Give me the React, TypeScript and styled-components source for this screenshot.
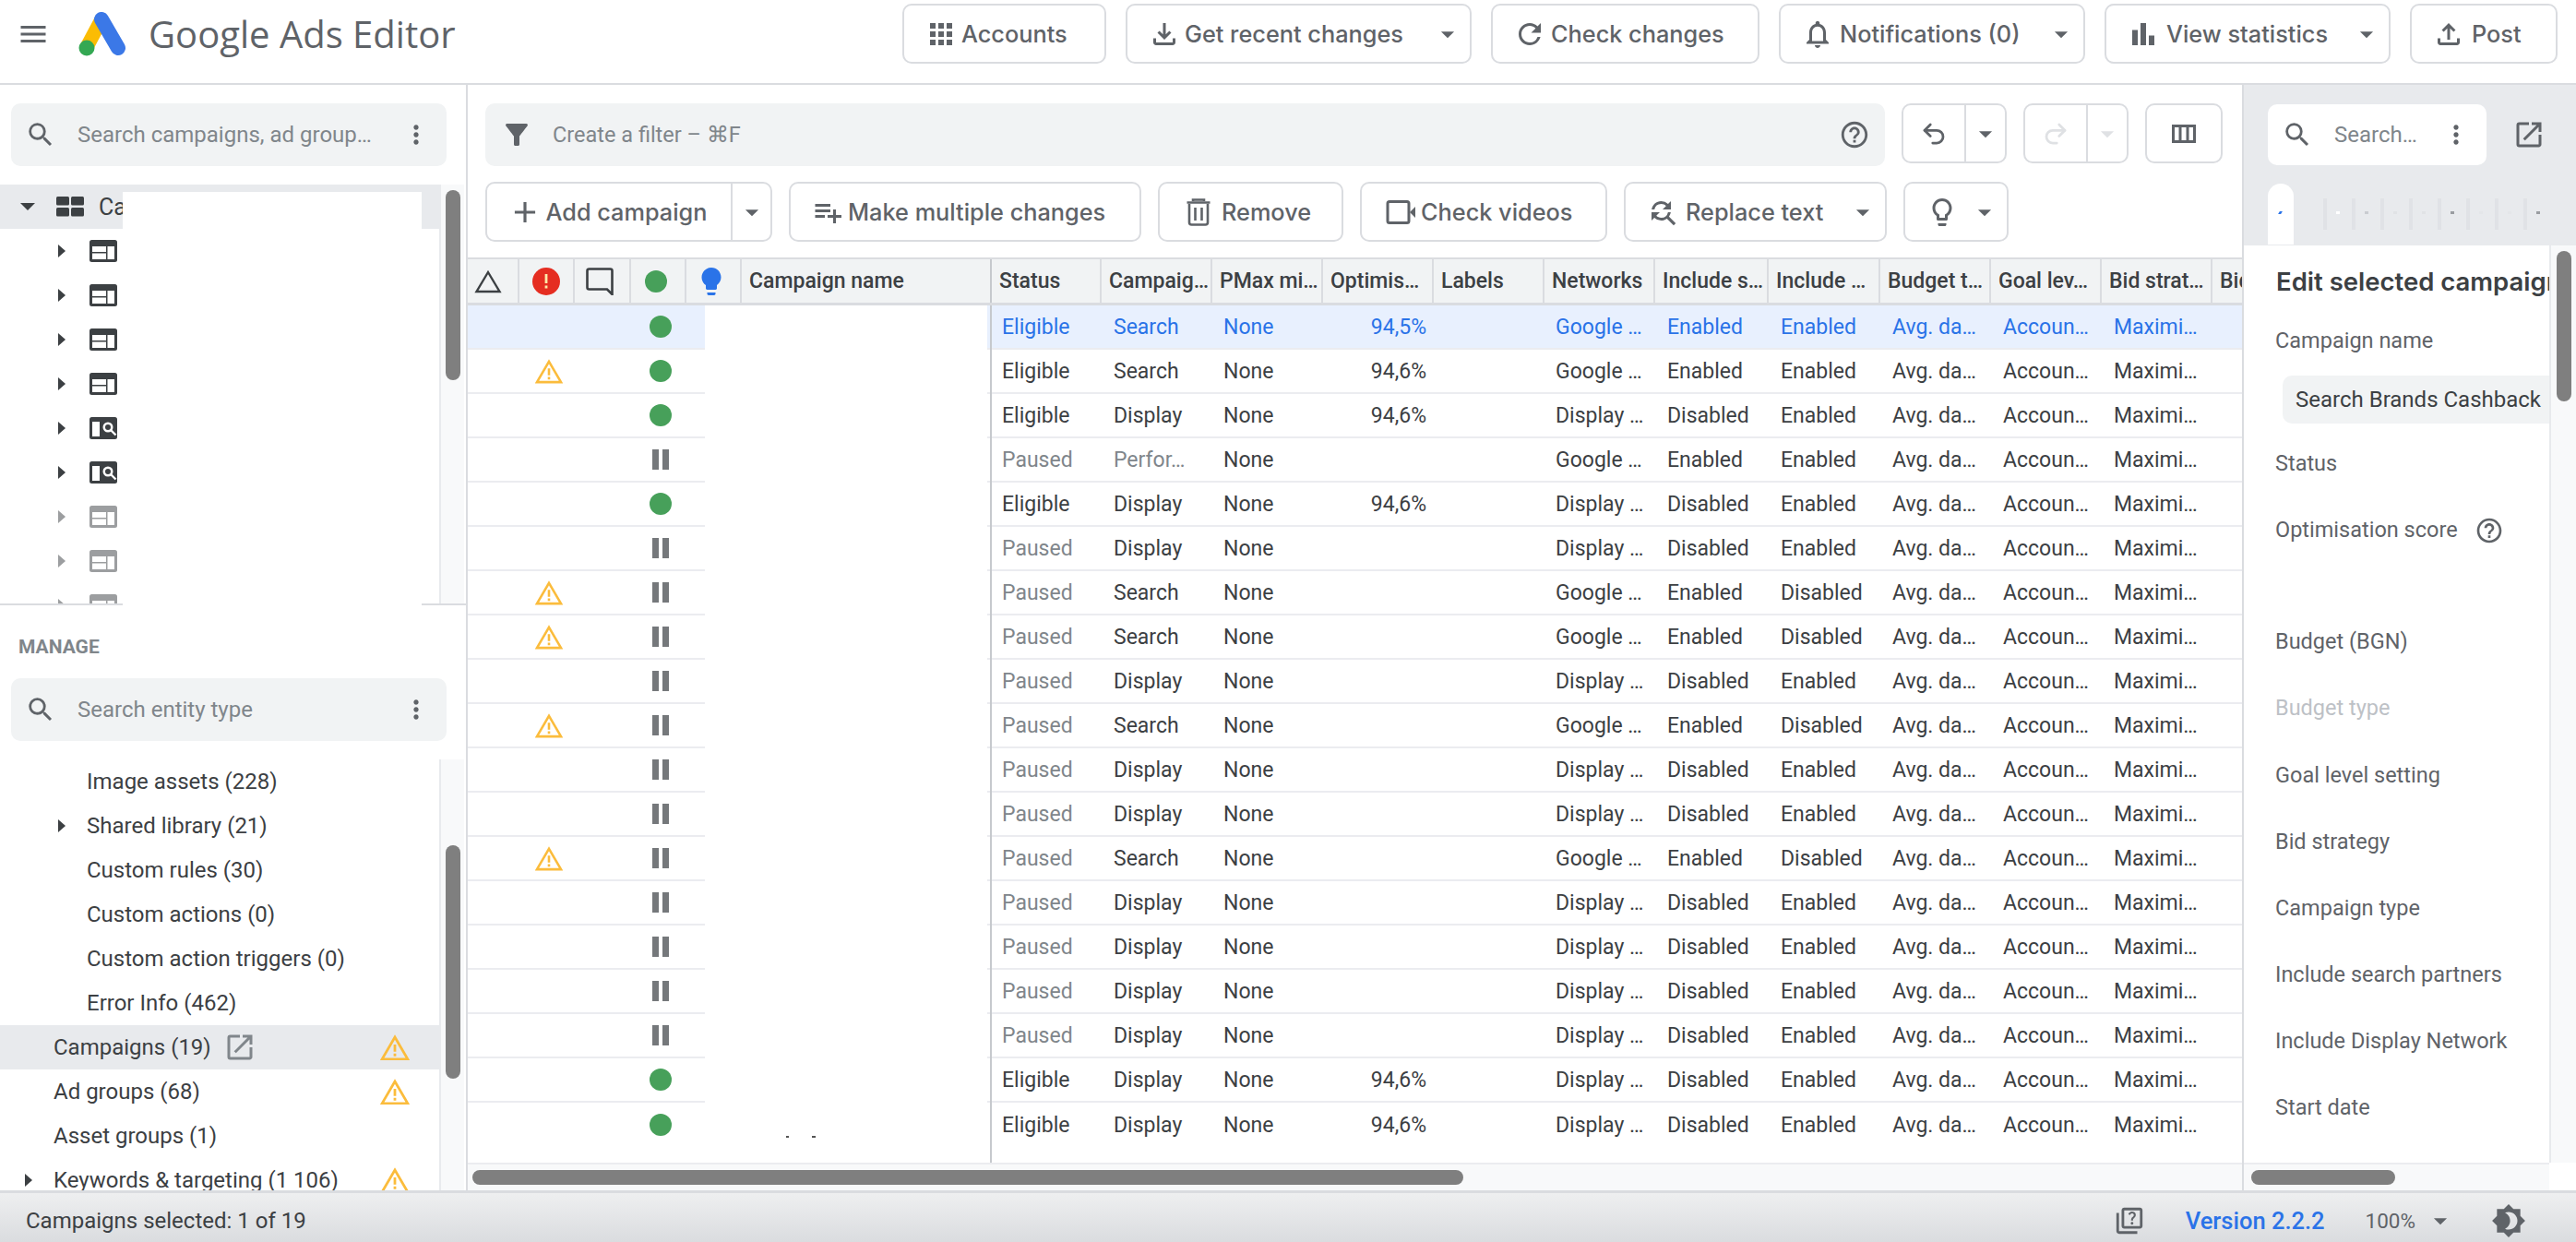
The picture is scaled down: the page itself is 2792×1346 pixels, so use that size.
import React from "react";
import styled, { createGlobalStyle } from "styled-components";
import { Redo2, Undo2 } from "lucide-react";
import {
    MdAdd,
    MdApps,
    MdArrowDropDown,
    MdBarChart,
    MdBrightness4,
    MdFilterAlt,
    MdFindReplace,
    MdHelpOutline,
    MdLightbulb,
    MdMenu,
    MdMoreVert,
    MdOpenInNew,
    MdOutlineFileDownload,
    MdOutlineFileUpload,
    MdOutlineLightbulb,
    MdOutlineNotifications,
    MdOutlineQuiz,
    MdPlaylistAdd,
    MdRefresh,
    MdSearch,
} from "react-icons/md";

const UI_FONT = `"Roboto", "Liberation Sans", sans-serif`;
const TITLE_FONT = `"Open Sans", "Roboto", sans-serif`;
const BUTTON_FONT = `"Inter", "Roboto", sans-serif`;

const Colors = {
    text: "#3c4043",
    icon: "#5f6368",
    muted: "#80868b",
    faint: "#dfe1e4",
    label: "#bdc1c6",
    line: "#dadce0",
    rowLine: "#ebecf0",
    field: "#f1f3f4",
    track: "#f8f9fa",
    thumb: "#7f7f7f",
    panel: "#e8eaed",
    blue: "#2a73e8",
    selected: "#e8f0fe",
    green: "#47a05a",
    yellow: "#fbbc3c",
};

const GlobalStyle = createGlobalStyle`
    html, body {
        margin: 0;
        padding: 0;
        background: #fff;
    }
    body {
        font-family: ${UI_FONT};
        color: ${Colors.text};
    }
    * {
        box-sizing: border-box;
    }
`;

const Page = styled.div`
    width: 2792px;
    height: 1346px;
    display: flex;
    flex-direction: column;
    overflow: hidden;
`;

/* top bar */

const TopBar = styled.header`
    height: 92px;
    flex: none;
    display: flex;
    align-items: flex-start;
    padding: 4px 20px 0 18px;
    border-bottom: 2px solid ${Colors.line};
`;

const Brand = styled.div`
    display: flex;
    align-items: center;
    height: 65px;
    color: ${Colors.icon};
    margin-right: auto;
`;

const LogoSlot = styled.div`
    margin: 0 24px 0 31px;
    display: flex;
`;

const Title = styled.h1`
    margin: 0;
    font-family: ${TITLE_FONT};
    font-size: 40px;
    font-weight: 500;
    color: ${Colors.icon};
`;

const TopButtons = styled.div`
    display: flex;
    gap: 21px;
`;

const Btn = styled.div<{ $w: number; $pad?: number; $disabled?: boolean }>`
    width: ${(p) => p.$w}px;
    height: 65px;
    flex: none;
    display: flex;
    align-items: center;
    padding: 0 7px 0 ${(p) => p.$pad ?? 22}px;
    border: 2px solid ${Colors.line};
    border-radius: 10px;
    background: #fff;
    font-family: ${BUTTON_FONT};
    font-size: 25.3px;
    font-weight: 500;
    color: ${(p) => (p.$disabled ? Colors.faint : Colors.icon)};
    white-space: nowrap;
`;

const BtnLabel = styled.span<{ $gap?: number }>`
    margin-left: ${(p) => p.$gap ?? 4}px;
    margin-right: auto;
`;

const CenteredLabel = styled.span`
    margin-left: 4px;
`;

const SplitPart = styled.div<{ $w: number; $nudge?: number }>`
    width: ${(p) => p.$w}px;
    height: 100%;
    flex: none;
    display: flex;
    align-items: center;
    justify-content: center;
    padding-right: ${(p) => p.$nudge ?? 0}px;
    & + & {
        border-left: 2px solid ${Colors.line};
    }
`;

const SplitBtn = styled(Btn)`
    padding: 0;
`;

/* left column */

const Body = styled.div`
    flex: 1;
    min-height: 0;
    display: flex;
`;

const LeftColumn = styled.aside`
    width: 507px;
    flex: none;
    display: flex;
    flex-direction: column;
    border-right: 2px solid ${Colors.line};
`;

const TreeSection = styled.section`
    position: relative;
    height: 564px;
    flex: none;
    padding-top: 20px;
    border-bottom: 2px solid ${Colors.line};
    display: flex;
    flex-direction: column;
`;

const Search = styled.div<{ $w?: number; $white?: boolean }>`
    width: ${(p) => p.$w ?? 472}px;
    height: 68px;
    flex: none;
    margin-left: 12px;
    display: flex;
    align-items: center;
    padding: 0 17px 0 15px;
    border-radius: 10px;
    background: ${(p) => (p.$white ? "#fff" : Colors.field)};
    color: ${Colors.icon};
    font-size: 24px;
`;

const SearchText = styled.span`
    margin-left: 23px;
    margin-right: auto;
    color: ${Colors.muted};
    white-space: nowrap;
`;

const ScrollArea = styled.div`
    flex: 1;
    min-height: 0;
    display: flex;
`;

const TreeScroll = styled(ScrollArea)`
    margin-top: 20px;
`;

const TreeList = styled.div`
    width: 476px;
    flex: none;
    overflow: hidden;
`;

const TreeRow = styled.div<{ $indent: number; $active?: boolean; $dim?: boolean }>`
    height: 48px;
    display: flex;
    align-items: center;
    padding-left: ${(p) => p.$indent}px;
    background: ${(p) => (p.$active ? Colors.panel : "transparent")};
    opacity: ${(p) => (p.$dim ? 0.5 : 1)};
    font-size: 25px;
    color: ${Colors.text};
`;

const Track = styled.div<{ $thumbTop: number; $thumbHeight: number }>`
    position: relative;
    width: 27px;
    flex: none;
    background: ${Colors.track};
    border-left: 2px solid ${Colors.panel};
    &::after {
        content: "";
        position: absolute;
        left: 5px;
        top: ${(p) => p.$thumbTop}px;
        width: 16px;
        height: ${(p) => p.$thumbHeight}px;
        border-radius: 8px;
        background: ${Colors.thumb};
    }
`;

const TreeCover = styled.div`
    position: absolute;
    left: 133px;
    top: 116px;
    width: 324px;
    bottom: -2px;
    background: #fff;
`;

const Caret = styled.i<{ $down?: boolean }>`
    display: block;
    width: 0;
    height: 0;
    flex: none;
    border-style: solid;
    ${(p) =>
        p.$down
            ? `border-width: 8px 8px 0 8px; border-color: ${Colors.text} transparent transparent transparent;`
            : `border-width: 7px 0 7px 8px; border-color: transparent transparent transparent ${Colors.text};`}
`;

const TreeIconSlot = styled.span<{ $left: number }>`
    display: flex;
    margin-left: ${(p) => p.$left}px;
`;

const TreeLabel = styled.span`
    margin-left: 16px;
`;

/* manage list */

const ManageSection = styled.section`
    flex: 1;
    min-height: 0;
    display: flex;
    flex-direction: column;
`;

const ManageHeading = styled.h2`
    margin: 0;
    height: 79px;
    padding: 33px 0 0 20px;
    font-size: 21px;
    line-height: 24px;
    font-weight: 700;
    color: ${Colors.muted};
    flex: none;
`;

const ManageList = styled.div`
    width: 476px;
    flex: none;
    overflow: hidden;
`;

const ManageRow = styled.div<{ $active?: boolean; $depth: number }>`
    height: 48px;
    display: flex;
    align-items: center;
    padding-left: ${(p) => (p.$depth ? 94 : 58)}px;
    padding-right: 32px;
    position: relative;
    background: ${(p) => (p.$active ? Colors.panel : "transparent")};
    font-size: 24px;
    white-space: nowrap;
`;

const RowCaret = styled.span<{ $depth: number }>`
    position: absolute;
    left: ${(p) => (p.$depth ? 63 : 27)}px;
    top: 17px;
`;

const RowWarn = styled.span`
    margin-left: auto;
    display: flex;
`;

const RowOpen = styled.span`
    margin-left: 13px;
    display: flex;
    color: ${Colors.muted};
`;

const ManageScroll = styled(ScrollArea)`
    margin-top: 20px;
    overflow: hidden;
`;

/* centre */

const Center = styled.main`
    flex: 1;
    min-width: 0;
    display: flex;
    flex-direction: column;
    border-right: 2px solid ${Colors.line};
`;

const FilterRow = styled.div`
    display: flex;
    gap: 18px;
    height: 105px;
    padding: 20px 0 0 19px;
    flex: none;
`;

const FilterBar = styled.div`
    width: 1517px;
    height: 68px;
    display: flex;
    align-items: center;
    padding: 0 16px 0 16px;
    background: ${Colors.field};
    border-radius: 10px;
    color: ${Colors.icon};
    font-size: 23.5px;
`;

const FilterText = styled(SearchText)`
    margin-left: 21px;
`;

const ActionRow = styled.div`
    display: flex;
    gap: 18px;
    height: 82px;
    padding-left: 19px;
    flex: none;
`;

const Table = styled.div`
    flex: 1;
    min-height: 0;
    overflow: hidden;
    border-top: 2px solid ${Colors.line};
    position: relative;
    &::after {
        content: "";
        position: absolute;
        left: 566px;
        top: 50px;
        bottom: 0;
        width: 2px;
        background: #c6c9cd;
    }
`;

const HeadRow = styled.div`
    height: 50px;
    display: flex;
    background: ${Colors.field};
    border-bottom: 3px solid ${Colors.line};
`;

const HeadIcon = styled.div<{ $w: number; $shift?: number }>`
    width: ${(p) => p.$w}px;
    flex: none;
    display: flex;
    align-items: center;
    justify-content: center;
    padding-right: ${(p) => p.$shift ?? 0}px;
    border-right: 2px solid ${Colors.line};
`;

const HeadCell = styled.div<{ $w: number; $strong?: boolean }>`
    width: ${(p) => p.$w}px;
    flex: none;
    display: flex;
    align-items: center;
    padding-left: 8px;
    font-size: 23px;
    font-weight: 500;
    color: ${Colors.text};
    white-space: nowrap;
    overflow: hidden;
    border-right: 2px solid ${(p) => (p.$strong ? "#c6c9cd" : Colors.line)};
`;

const Rows = styled.div`
    height: 930px;
`;

const DataRow = styled.div<{ $selected?: boolean }>`
    height: 48px;
    display: flex;
    background: ${(p) => (p.$selected ? Colors.selected : "#fff")};
    border-bottom: 2px solid ${Colors.rowLine};
    font-size: 23px;
    color: ${(p) => (p.$selected ? Colors.blue : Colors.text)};
    white-space: nowrap;
    &:last-child {
        border-bottom: 0;
    }
`;

const WarnCell = styled.div`
    width: 120px;
    padding-left: 56px;
    flex: none;
    display: flex;
    align-items: center;
    justify-content: center;
`;

const StateCell = styled.div`
    width: 137px;
    padding-right: 18px;
    flex: none;
    display: flex;
    align-items: center;
    justify-content: flex-end;
`;

const StateSlot = styled.div`
    width: 60px;
    display: flex;
    justify-content: center;
`;

const Dot = styled.span`
    width: 24px;
    height: 24px;
    border-radius: 50%;
    background: ${Colors.green};
`;

const Pause = styled.span`
    width: 18px;
    height: 22px;
    border-left: 7px solid #75787b;
    border-right: 7px solid #75787b;
`;

const NameCell = styled.div`
    width: 306px;
    flex: none;
    background: #fff;
    margin-bottom: -2px;
`;

const NameGap = styled.div`
    width: 6px;
    flex: none;
`;

const Cell = styled.div<{ $w: number; $pad?: number; $right?: boolean; $dim?: boolean }>`
    width: ${(p) => p.$w}px;
    flex: none;
    display: flex;
    align-items: center;
    justify-content: ${(p) => (p.$right ? "flex-end" : "flex-start")};
    padding-left: ${(p) => p.$pad ?? 12}px;
    padding-right: ${(p) => (p.$right ? 9 : 0)}px;
    color: ${(p) => (p.$dim ? Colors.muted : "inherit")};
`;

const Specks = styled.i`
    position: absolute;
    left: 345px;
    top: 950px;
    width: 32px;
    height: 2px;
    background: linear-gradient(90deg, #555 0 3px, transparent 3px 28px, #555 28px 32px);
`;

const HScroll = styled.div<{ $left: number; $width: number }>`
    position: relative;
    height: 30px;
    flex: none;
    background: ${Colors.track};
    border-top: 2px solid ${Colors.rowLine};
    &::after {
        content: "";
        position: absolute;
        left: ${(p) => p.$left}px;
        top: 6px;
        width: ${(p) => p.$width}px;
        height: 16px;
        border-radius: 8px;
        background: ${Colors.thumb};
    }
`;

/* right panel */

const RightPanel = styled.aside`
    width: 360px;
    flex: none;
    display: flex;
    flex-direction: column;
`;

const RightHead = styled.div`
    height: 174px;
    flex: none;
    background: ${Colors.panel};
    padding-top: 21px;
    color: ${Colors.icon};
`;

const RightSearchRow = styled.div`
    display: flex;
    align-items: center;
    padding-left: 14px;
`;

const RightSearch = styled(Search)`
    height: 66px;
`;

const OpenSlot = styled.span`
    margin-left: 28px;
    display: flex;
`;

const TabStrip = styled.div`
    display: flex;
    align-items: flex-end;
    height: 66px;
    margin-top: 20px;
    padding-left: 26px;
`;

const ActiveTab = styled.div`
    position: relative;
    width: 28px;
    height: 66px;
    margin-right: 32px;
    background: #fff;
    border-radius: 14px 14px 0 0;
    flex: none;
    &::after {
        content: "";
        position: absolute;
        left: 12px;
        top: 30px;
        width: 3px;
        height: 3px;
        background: ${Colors.blue};
        transform: skewX(-30deg);
    }
`;

const TabLine = styled.span`
    position: relative;
    width: 4px;
    height: 34px;
    margin: 0 27px 16px 0;
    background: #e0e2e6;
    flex: none;
`;

const TabDot = styled.i<{ $tone: string }>`
    position: absolute;
    left: 14px;
    top: 14px;
    width: 4px;
    height: 3px;
    background: ${(p) => p.$tone};
`;

const RightScroll = styled.div`
    flex: 1;
    min-height: 0;
    display: flex;
`;

const Form = styled.div`
    width: 331px;
    flex: none;
    overflow: hidden;
    padding-left: 34px;
    white-space: nowrap;
`;

const FormTitle = styled.h3`
    margin: 0;
    height: 88px;
    padding: 21px 0 0 1px;
    font-family: ${BUTTON_FONT};
    font-size: 27.5px;
    line-height: 36px;
    font-weight: 600;
    color: ${Colors.text};
`;

const FieldLabel = styled.div<{ $h: number; $disabled?: boolean }>`
    height: ${(p) => p.$h}px;
    display: flex;
    align-items: flex-start;
    font-size: 23.5px;
    line-height: 30px;
    color: ${(p) => (p.$disabled ? Colors.label : Colors.icon)};
`;

const HelpSlot = styled.span`
    margin-left: 18px;
    display: flex;
`;

const NameInput = styled.div`
    height: 52px;
    margin: 0 0 28px 8px;
    width: 320px;
    display: flex;
    align-items: center;
    padding-left: 14px;
    border-radius: 10px;
    background: ${Colors.field};
    font-size: 24px;
    color: ${Colors.text};
`;

const RightTrack = styled.div`
    position: relative;
    flex: 1;
    background: ${Colors.track};
    border-left: 2px solid ${Colors.panel};
    &::after {
        content: "";
        position: absolute;
        left: 6px;
        top: 6px;
        width: 16px;
        height: 163px;
        border-radius: 8px;
        background: ${Colors.thumb};
    }
`;

const RightBottom = styled.div`
    width: 331px;
`;

/* footer */

const Footer = styled.footer`
    height: 56px;
    flex: none;
    display: flex;
    align-items: center;
    padding: 6px 54px 0 28px;
    border-top: 3px solid ${Colors.line};
    background: linear-gradient(#eeeff0, #dadcdf);
    font-size: 24px;
    color: ${Colors.text};
`;

const FooterLeft = styled.span`
    margin-right: auto;
`;

const VersionLink = styled.span`
    margin: 0 44px 0 44px;
    color: ${Colors.blue};
    font-size: 25.5px;
    font-weight: 500;
`;

const Zoom = styled.span`
    display: flex;
    align-items: center;
    font-size: 22.5px;
    color: ${Colors.icon};
    margin-right: 38px;
    gap: 10px;
`;

/* drawn icons */

const Logo = () => (
    <svg width="52" height="48" viewBox="0 0 52 48">
        <path d="M25 8 L9 38" stroke="#fbbc04" strokeWidth="15" fill="none" />
        <circle cx="9" cy="39" r="8.5" fill="#34a853" />
        <path d="M25 8 L43 39" stroke="#3b78e7" strokeWidth="16" strokeLinecap="round" fill="none" />
    </svg>
);

const Warning = ({ size = 32 }: { size?: number }) => (
    <svg width={size} height={size * 0.9} viewBox="0 0 32 29">
        <path d="M16 3 L30 27 H2 Z" fill="none" stroke={Colors.yellow} strokeWidth="2.8" />
        <path d="M14.6 11 h2.8 v8 h-2.8z M14.6 21 h2.8 v2.8 h-2.8z" fill={Colors.yellow} />
    </svg>
);

const ErrorMark = () => (
    <svg width="30" height="30" viewBox="0 0 30 30">
        <circle cx="15" cy="15" r="15" fill="#e52d21" />
        <path d="M13.6 7 h2.8 v10 h-2.8z M13.6 19.5 h2.8 v3 h-2.8z" fill="#fde9a8" />
    </svg>
);

const DeltaMark = () => (
    <svg width="30" height="26" viewBox="0 0 30 26">
        <path d="M15 3 L27.5 24 H2.5 Z" fill="none" stroke={Colors.text} strokeWidth="2.4" />
    </svg>
);

const CommentMark = () => (
    <svg width="30" height="30" viewBox="0 0 30 30">
        <path d="M3.5 1.5 H26.5 Q28.5 1.5 28.5 3.5 V29 L23 23.5 H3.5 Q1.5 23.5 1.5 21.5 V3.5 Q1.5 1.5 3.5 1.5 Z" fill="none" stroke={Colors.text} strokeWidth="2.6" />
    </svg>
);

const GridIcon = () => (
    <svg width="30" height="22" viewBox="0 0 30 22">
        <rect x="0" y="0" width="14" height="9.5" rx="1.5" fill="#3c4043" />
        <rect x="16" y="0" width="14" height="9.5" rx="1.5" fill="#3c4043" />
        <rect x="0" y="12" width="14" height="9.5" rx="1.5" fill="#3c4043" />
        <rect x="16" y="12" width="14" height="9.5" rx="1.5" fill="#3c4043" />
    </svg>
);

const TableIcon = () => (
    <svg width="30" height="24" viewBox="0 0 30 24">
        <rect width="30" height="24" rx="2.5" fill="#3c4043" />
        <rect x="3" y="7" width="15" height="6" fill="#fff" />
        <rect x="3" y="14.5" width="15" height="6.5" fill="#fff" />
        <rect x="19.5" y="7" width="7.5" height="14" fill="#fff" />
    </svg>
);

const SearchTableIcon = () => (
    <svg width="30" height="24" viewBox="0 0 30 24">
        <rect width="30" height="24" rx="2.5" fill="#3c4043" />
        <rect x="3" y="5" width="8" height="16" fill="#fff" />
        <circle cx="20" cy="11" r="5.5" fill="#fff" />
        <circle cx="20" cy="11" r="3" fill="#3c4043" />
        <path d="M23 14 L28.5 19.5" stroke="#fff" strokeWidth="2.4" />
    </svg>
);

const TrashIcon = () => (
    <svg width="32" height="32" viewBox="0 0 32 32">
        <path d="M3.5 5.5 H28.5 M10 4 V2.5 H22 V4" fill="none" stroke={Colors.icon} strokeWidth="2.6" />
        <path d="M6 7 V27 Q6 29.5 8.5 29.5 H23.5 Q26 29.5 26 27 V7" fill="none" stroke={Colors.icon} strokeWidth="2.6" />
        <path d="M12.5 11 V25 M19.5 11 V25" fill="none" stroke={Colors.icon} strokeWidth="2.6" />
    </svg>
);

const VideoIcon = () => (
    <svg width="34" height="28" viewBox="0 0 34 28">
        <rect x="2" y="2.5" width="23" height="23" rx="2" fill="none" stroke={Colors.icon} strokeWidth="3" />
        <path d="M26 14 L32 8 V20 Z" fill={Colors.icon} />
    </svg>
);

const ColumnsIcon = () => (
    <svg width="26" height="20" viewBox="0 0 26 20">
        <path d="M0 0 H26 V20 H0 Z M3 3 V17 H7.5 V3 Z M10.5 3 V17 H15.5 V3 Z M18.5 3 V17 H23 V3 Z" fill={Colors.icon} fillRule="evenodd" />
    </svg>
);

/* data */

type Campaign = {
    status: "Eligible" | "Paused";
    type: string;
    score?: string;
    partners: "Enabled" | "Disabled";
    display: "Enabled" | "Disabled";
    warn?: boolean;
};

const paused = (type: string, warn = false): Campaign => ({
    status: "Paused",
    type,
    partners: type === "Search" ? "Enabled" : "Disabled",
    display: type === "Search" ? "Disabled" : "Enabled",
    warn,
});

const campaigns: Campaign[] = [
    { status: "Eligible", type: "Search", score: "94,5%", partners: "Enabled", display: "Enabled" },
    { status: "Eligible", type: "Search", score: "94,6%", partners: "Enabled", display: "Enabled", warn: true },
    { status: "Eligible", type: "Display", score: "94,6%", partners: "Disabled", display: "Enabled" },
    { status: "Paused", type: "Perfor…", partners: "Enabled", display: "Enabled" },
    { status: "Eligible", type: "Display", score: "94,6%", partners: "Disabled", display: "Enabled" },
    paused("Display"),
    paused("Search", true),
    paused("Search", true),
    paused("Display"),
    paused("Search", true),
    paused("Display"),
    paused("Display"),
    paused("Search", true),
    paused("Display"),
    paused("Display"),
    paused("Display"),
    paused("Display"),
    { status: "Eligible", type: "Display", score: "94,6%", partners: "Disabled", display: "Enabled" },
    { status: "Eligible", type: "Display", score: "94,6%", partners: "Disabled", display: "Enabled" },
];

const headColumns: [string, number][] = [
    ["Status", 119],
    ["Campaig…", 120],
    ["PMax mi…", 120],
    ["Optimis…", 120],
    ["Labels", 120],
    ["Networks", 120],
    ["Include s…", 123],
    ["Include …", 121],
    ["Budget t…", 120],
    ["Goal lev…", 120],
    ["Bid strat…", 120],
    ["Bid", 120],
];

const treeRows = [
    { kind: "table" },
    { kind: "table" },
    { kind: "table" },
    { kind: "table" },
    { kind: "search" },
    { kind: "search" },
    { kind: "table", dim: true },
    { kind: "table", dim: true },
    { kind: "table", dim: true },
];

const manageRows = [
    { label: "Image assets (228)", depth: 1 },
    { label: "Shared library (21)", depth: 1, caret: true },
    { label: "Custom rules (30)", depth: 1 },
    { label: "Custom actions (0)", depth: 1 },
    { label: "Custom action triggers (0)", depth: 1 },
    { label: "Error Info (462)", depth: 1 },
    { label: "Campaigns (19)", depth: 0, active: true, warn: true, open: true },
    { label: "Ad groups (68)", depth: 0, warn: true },
    { label: "Asset groups (1)", depth: 0 },
    { label: "Keywords & targeting (1 106)", depth: 0, caret: true, warn: true },
];

const fields: { label: string; h: number; disabled?: boolean; help?: boolean }[] = [
    { label: "Status", h: 72 },
    { label: "Optimisation score", h: 121, help: true },
    { label: "Budget (BGN)", h: 72 },
    { label: "Budget type", h: 73, disabled: true },
    { label: "Goal level setting", h: 72 },
    { label: "Bid strategy", h: 72 },
    { label: "Campaign type", h: 72 },
    { label: "Include search partners", h: 72 },
    { label: "Include Display Network", h: 72 },
    { label: "Start date", h: 40 },
];

const tabDots = ["#fff", "#c9ccd0", "#e0e2e5", "#e0e2e5", "#9a9da1", "#e4e6e9", "#e4e6e9", "#9a9da1"];

const App: React.FC = () => {
    return (
        <Page>
            <GlobalStyle />
            <TopBar>
                <Brand>
                    <MdMenu size={36} />
                    <LogoSlot>
                        <Logo />
                    </LogoSlot>
                    <Title>Google Ads Editor</Title>
                </Brand>
                <TopButtons>
                    <Btn $w={221}>
                        <MdApps size={36} />
                        <BtnLabel>Accounts</BtnLabel>
                    </Btn>
                    <Btn $w={375}>
                        <MdOutlineFileDownload size={36} />
                        <BtnLabel>Get recent changes</BtnLabel>
                        <MdArrowDropDown size={34} />
                    </Btn>
                    <Btn $w={291}>
                        <MdRefresh size={36} />
                        <BtnLabel $gap={5}>Check changes</BtnLabel>
                    </Btn>
                    <Btn $w={332}>
                        <MdOutlineNotifications size={36} />
                        <BtnLabel $gap={6}>Notifications (0)</BtnLabel>
                        <MdArrowDropDown size={34} />
                    </Btn>
                    <Btn $w={310}>
                        <MdBarChart size={36} />
                        <BtnLabel $gap={7}>View statistics</BtnLabel>
                        <MdArrowDropDown size={34} />
                    </Btn>
                    <Btn $w={160}>
                        <MdOutlineFileUpload size={36} />
                        <BtnLabel $gap={7}>Post</BtnLabel>
                    </Btn>
                </TopButtons>
            </TopBar>
            <Body>
                <LeftColumn>
                    <TreeSection>
                        <Search>
                            <MdSearch size={34} />
                            <SearchText>Search campaigns, ad group…</SearchText>
                            <MdMoreVert size={32} />
                        </Search>
                        <TreeScroll>
                            <TreeList>
                                <TreeRow $indent={22} $active>
                                    <Caret $down />
                                    <TreeIconSlot $left={23}>
                                        <GridIcon />
                                    </TreeIconSlot>
                                    <TreeLabel>Campaigns</TreeLabel>
                                </TreeRow>
                                {treeRows.map((row, i) => (
                                    <TreeRow key={i} $indent={63} $dim={row.dim}>
                                        <Caret />
                                        <TreeIconSlot $left={26}>
                                            {row.kind === "table" ? <TableIcon /> : <SearchTableIcon />}
                                        </TreeIconSlot>
                                    </TreeRow>
                                ))}
                            </TreeList>
                            <Track $thumbTop={6} $thumbHeight={206} />
                        </TreeScroll>
                        <TreeCover />
                    </TreeSection>
                    <ManageSection>
                        <ManageHeading>MANAGE</ManageHeading>
                        <Search>
                            <MdSearch size={34} />
                            <SearchText>Search entity type</SearchText>
                            <MdMoreVert size={32} />
                        </Search>
                        <ManageScroll>
                            <ManageList>
                                {manageRows.map((row) => (
                                    <ManageRow key={row.label} $depth={row.depth} $active={row.active}>
                                        {row.caret && (
                                            <RowCaret $depth={row.depth}>
                                                <Caret />
                                            </RowCaret>
                                        )}
                                        {row.label}
                                        {row.open && (
                                            <RowOpen>
                                                <MdOpenInNew size={36} />
                                            </RowOpen>
                                        )}
                                        {row.warn && (
                                            <RowWarn>
                                                <Warning />
                                            </RowWarn>
                                        )}
                                    </ManageRow>
                                ))}
                            </ManageList>
                            <Track $thumbTop={93} $thumbHeight={253} />
                        </ManageScroll>
                    </ManageSection>
                </LeftColumn>
                <Center>
                    <FilterRow>
                        <FilterBar>
                            <MdFilterAlt size={36} />
                            <FilterText>Create a filter – ⌘F</FilterText>
                            <MdHelpOutline size={34} />
                        </FilterBar>
                        <SplitBtn $w={114}>
                            <SplitPart $w={66}>
                                <Undo2 size={30} strokeWidth={2.2} />
                            </SplitPart>
                            <SplitPart $w={44}>
                                <MdArrowDropDown size={34} />
                            </SplitPart>
                        </SplitBtn>
                        <SplitBtn $w={114} $disabled>
                            <SplitPart $w={66}>
                                <Redo2 size={30} strokeWidth={2.2} />
                            </SplitPart>
                            <SplitPart $w={44}>
                                <MdArrowDropDown size={34} />
                            </SplitPart>
                        </SplitBtn>
                        <SplitBtn $w={84}>
                            <SplitPart $w={80}>
                                <ColumnsIcon />
                            </SplitPart>
                        </SplitBtn>
                    </FilterRow>
                    <ActionRow>
                        <SplitBtn $w={311}>
                            <SplitPart $w={264} $nudge={4}>
                                <MdAdd size={38} />
                                <CenteredLabel>Add campaign</CenteredLabel>
                            </SplitPart>
                            <SplitPart $w={43}>
                                <MdArrowDropDown size={34} />
                            </SplitPart>
                        </SplitBtn>
                        <Btn $w={382}>
                            <MdPlaylistAdd size={36} />
                            <BtnLabel>Make multiple changes</BtnLabel>
                        </Btn>
                        <Btn $w={201} $pad={26}>
                            <TrashIcon />
                            <BtnLabel $gap={9}>Remove</BtnLabel>
                        </Btn>
                        <Btn $w={268} $pad={26}>
                            <VideoIcon />
                            <BtnLabel>Check videos</BtnLabel>
                        </Btn>
                        <Btn $w={285}>
                            <MdFindReplace size={36} />
                            <BtnLabel $gap={7}>Replace text</BtnLabel>
                            <MdArrowDropDown size={34} />
                        </Btn>
                        <Btn $w={114}>
                            <MdOutlineLightbulb size={36} />
                            <BtnLabel />
                            <MdArrowDropDown size={34} />
                        </Btn>
                    </ActionRow>
                    <Table>
                        <HeadRow>
                            <HeadIcon $w={56} $shift={10}>
                                <DeltaMark />
                            </HeadIcon>
                            <HeadIcon $w={60}>
                                <ErrorMark />
                            </HeadIcon>
                            <HeadIcon $w={61} $shift={6}>
                                <CommentMark />
                            </HeadIcon>
                            <HeadIcon $w={60} $shift={4}>
                                <Dot />
                            </HeadIcon>
                            <HeadIcon $w={60} $shift={4}>
                                <MdLightbulb size={36} color={Colors.blue} />
                            </HeadIcon>
                            <HeadCell $w={271} $strong>
                                Campaign name
                            </HeadCell>
                            {headColumns.map(([label, w]) => (
                                <HeadCell key={label} $w={w}>
                                    {label}
                                </HeadCell>
                            ))}
                        </HeadRow>
                        <Rows>
                            {campaigns.map((c, i) => (
                                <DataRow key={i} $selected={i === 0}>
                                    <WarnCell>{c.warn && <Warning size={30} />}</WarnCell>
                                    <StateCell>
                                        <StateSlot>{c.status === "Eligible" ? <Dot /> : <Pause />}</StateSlot>
                                    </StateCell>
                                    <NameCell />
                                    <NameGap />
                                    <Cell $w={119} $pad={10} $dim={c.status === "Paused"}>
                                        {c.status}
                                    </Cell>
                                    <Cell $w={120} $dim={c.type === "Perfor…"}>
                                        {c.type}
                                    </Cell>
                                    <Cell $w={120} $pad={11}>
                                        None
                                    </Cell>
                                    <Cell $w={120} $right>
                                        {c.score}
                                    </Cell>
                                    <Cell $w={120} />
                                    <Cell $w={120} $pad={11}>
                                        {c.type === "Display" ? "Display …" : "Google …"}
                                    </Cell>
                                    <Cell $w={123}>{c.partners}</Cell>
                                    <Cell $w={121}>{c.display}</Cell>
                                    <Cell $w={120}>Avg. da…</Cell>
                                    <Cell $w={120}>Accoun…</Cell>
                                    <Cell $w={120}>Maximi…</Cell>
                                </DataRow>
                            ))}
                        </Rows>
                        <Specks />
                    </Table>
                    <HScroll $left={5} $width={1074} />
                </Center>
                <RightPanel>
                    <RightHead>
                        <RightSearchRow>
                            <RightSearch $w={237} $white>
                                <MdSearch size={34} />
                                <SearchText>Search…</SearchText>
                                <MdMoreVert size={32} />
                            </RightSearch>
                            <OpenSlot>
                                <MdOpenInNew size={36} />
                            </OpenSlot>
                        </RightSearchRow>
                        <TabStrip>
                            <ActiveTab />
                            {tabDots.map((tone, i) => (
                                <TabLine key={i}>
                                    <TabDot $tone={tone} />
                                </TabLine>
                            ))}
                        </TabStrip>
                    </RightHead>
                    <RightScroll>
                        <Form>
                            <FormTitle>Edit selected campaign</FormTitle>
                            <FieldLabel $h={53}>Campaign name</FieldLabel>
                            <NameInput>Search Brands Cashback</NameInput>
                            {fields.map((f) => (
                                <FieldLabel key={f.label} $h={f.h} $disabled={f.disabled}>
                                    {f.label}
                                    {f.help && (
                                        <HelpSlot>
                                            <MdHelpOutline size={32} />
                                        </HelpSlot>
                                    )}
                                </FieldLabel>
                            ))}
                        </Form>
                        <RightTrack />
                    </RightScroll>
                    <RightBottom>
                        <HScroll $left={8} $width={156} />
                    </RightBottom>
                </RightPanel>
            </Body>
            <Footer>
                <FooterLeft>Campaigns selected: 1 of 19</FooterLeft>
                <MdOutlineQuiz size={34} color={Colors.icon} />
                <VersionLink>Version 2.2.2</VersionLink>
                <Zoom>
                    100%
                    <MdArrowDropDown size={34} />
                </Zoom>
                <MdBrightness4 size={38} color={Colors.icon} />
            </Footer>
        </Page>
    );
};

export default App;
